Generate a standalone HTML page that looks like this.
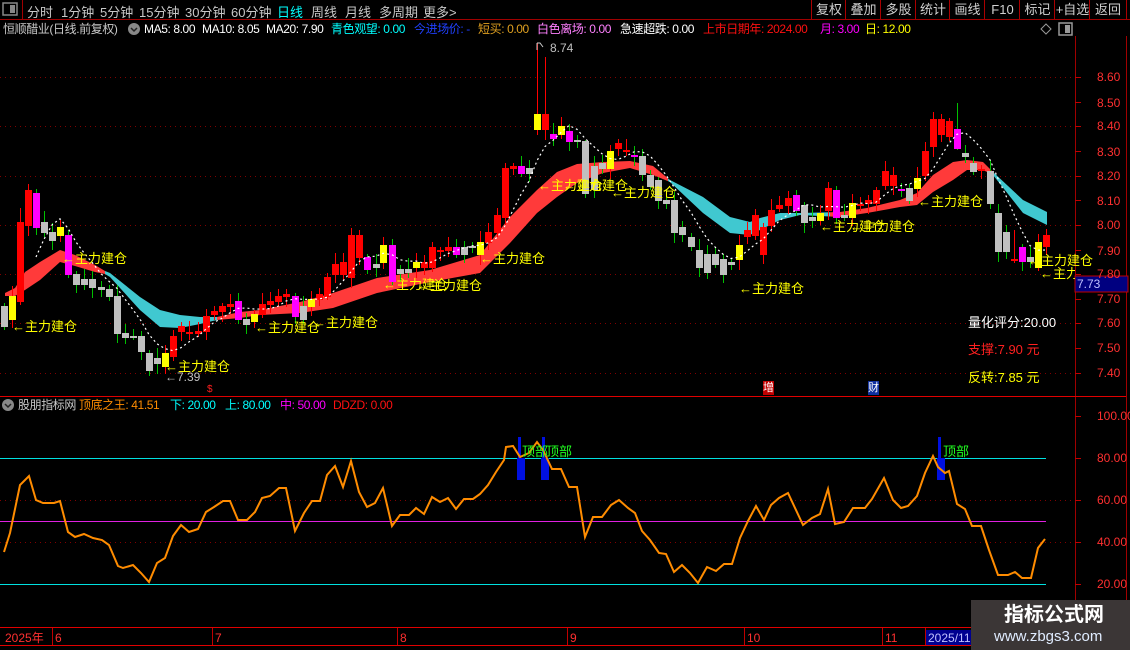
<!DOCTYPE html>
<html><head><meta charset="utf-8">
<style>
body{margin:0;background:#000;width:1130px;height:650px;overflow:hidden;position:relative;font-family:"Liberation Sans","Noto Sans CJK SC",sans-serif;}
.t{position:absolute;white-space:nowrap;font-size:12px;line-height:14px;}
.tb{position:absolute;top:2px;font-size:13px;color:#c8c8c8;white-space:nowrap;}
.btn{position:absolute;top:0;height:19px;border-left:1px solid #a00;color:#d0d0d0;font-size:13px;line-height:19px;text-align:center;}
.lab{position:absolute;color:#ffff00;font-size:13px;white-space:nowrap;line-height:14px;}
.ax{position:absolute;left:1097px;color:#ff3030;font-size:12px;line-height:12px;}
.n{letter-spacing:-0.4px;}
</style></head><body>
<svg id="s" width="1130" height="650" style="position:absolute;left:0;top:0">
<g stroke="#a00000" stroke-width="1">
<line x1="0" y1="19.5" x2="1130" y2="19.5"/>
<line x1="22.5" y1="0" x2="22.5" y2="19"/>
<line x1="1075.5" y1="36" x2="1075.5" y2="630"/>
<line x1="1126.5" y1="36" x2="1126.5" y2="630"/>
<line x1="0" y1="396.5" x2="1126" y2="396.5" stroke="#e00000"/>
<line x1="0" y1="627.5" x2="1126" y2="627.5" stroke="#e00000"/>
<line x1="0" y1="645.5" x2="971" y2="645.5" stroke="#e00000"/>
</g>
<rect x="3" y="3" width="14" height="12" fill="none" stroke="#888" stroke-width="1.5"/><rect x="10" y="5" width="5" height="8" fill="#888"/>
<g stroke="#800000" stroke-dasharray="1,4">
<line x1="0" y1="77.5" x2="1075" y2="77.5"/><line x1="0" y1="126.5" x2="1075" y2="126.5"/><line x1="0" y1="176.5" x2="1075" y2="176.5"/><line x1="0" y1="225.5" x2="1075" y2="225.5"/><line x1="0" y1="274.5" x2="1075" y2="274.5"/><line x1="0" y1="323.5" x2="1075" y2="323.5"/><line x1="0" y1="373.5" x2="1075" y2="373.5"/>
<line x1="0" y1="500.5" x2="1075" y2="500.5"/><line x1="0" y1="542.5" x2="1075" y2="542.5"/>
</g>
<g stroke="#c00000">
<line x1="1075" y1="77.5" x2="1081" y2="77.5"/><line x1="1075" y1="102.5" x2="1081" y2="102.5"/><line x1="1075" y1="126.5" x2="1081" y2="126.5"/><line x1="1075" y1="151.5" x2="1081" y2="151.5"/><line x1="1075" y1="176.5" x2="1081" y2="176.5"/><line x1="1075" y1="200.5" x2="1081" y2="200.5"/><line x1="1075" y1="225.5" x2="1081" y2="225.5"/><line x1="1075" y1="250.5" x2="1081" y2="250.5"/><line x1="1075" y1="274.5" x2="1081" y2="274.5"/><line x1="1075" y1="299.5" x2="1081" y2="299.5"/><line x1="1075" y1="323.5" x2="1081" y2="323.5"/><line x1="1075" y1="348.5" x2="1081" y2="348.5"/><line x1="1075" y1="373.5" x2="1081" y2="373.5"/>
<line x1="1075" y1="416.5" x2="1081" y2="416.5"/><line x1="1075" y1="458.5" x2="1081" y2="458.5"/><line x1="1075" y1="500.5" x2="1081" y2="500.5"/><line x1="1075" y1="542.5" x2="1081" y2="542.5"/><line x1="1075" y1="584.5" x2="1081" y2="584.5"/>
<line x1="52.5" y1="628" x2="52.5" y2="645"/><line x1="212.5" y1="628" x2="212.5" y2="645"/><line x1="397.5" y1="628" x2="397.5" y2="645"/><line x1="567.5" y1="628" x2="567.5" y2="645"/><line x1="744.5" y1="628" x2="744.5" y2="645"/><line x1="882.5" y1="628" x2="882.5" y2="645"/><line x1="925.5" y1="628" x2="925.5" y2="645"/>
</g>
<g id="rib"></g>
<g id="cdl"></g>
<polyline id="ma" fill="none" stroke="#fff" stroke-width="1.2" stroke-dasharray="2,3"/>
<line x1="0" y1="458.5" x2="1046" y2="458.5" stroke="#00e0e0"/>
<line x1="0" y1="521.5" x2="1046" y2="521.5" stroke="#e020e0"/>
<line x1="0" y1="584.5" x2="1046" y2="584.5" stroke="#00e0e0"/>
<g fill="#0010e0"><rect x="518" y="437" width="3" height="43"/><rect x="517" y="458" width="8" height="22"/><rect x="542" y="437" width="3" height="43"/><rect x="541" y="458" width="8" height="22"/><rect x="938" y="437" width="3" height="43"/><rect x="937" y="458" width="8" height="22"/></g>
<polyline fill="none" stroke="#ff8c00" stroke-width="2" points="4,552 10,533 20,485 29,476 36,500 43,503 54,503 60,501 68,532 75,537 84,534 93,538 102,540 109,545 118,566 123,568 133,565 141,573 149,582 157,563 165,558 173,536 181,525 189,532 198,529 206,512 214,507 223,501 230,501 238,520 247,520 255,512 262,498 270,496 279,488 286,488 295,531 304,513 312,501 320,501 327,475 335,466 343,487 351,461 359,492 367,507 375,503 383,488 392,526 400,515 409,515 416,508 424,514 432,497 440,502 448,498 456,509 464,499 473,499 480,494 488,485 496,472 504,460 506,447 513,446 520,457 529,453 537,442 543,450 552,469 561,469 569,487 577,487 585,537 593,517 602,517 611,505 619,500 628,508 635,513 642,531 650,540 659,553 666,554 674,572 682,565 690,573 698,583 707,567 716,571 724,564 732,564 740,538 748,521 756,506 764,520 771,505 779,498 788,493 803,525 812,518 820,514 828,489 835,524 844,522 853,508 865,508 872,499 884,478 893,500 901,508 908,506 917,496 925,473 933,456 938,467 945,473 949,471 957,504 965,509 972,526 981,526 989,550 998,575 1008,575 1015,572 1022,578 1031,578 1038,548 1045,539"/>
<circle cx="8" cy="405" r="6" fill="#888"/><path d="M5 404 L8 407 L11 404" stroke="#222" stroke-width="1.5" fill="none"/>
<circle cx="134" cy="29" r="6" fill="#888"/><path d="M131 28 L134 31 L137 28" stroke="#222" stroke-width="1.5" fill="none"/>
<path d="M1046 24 L1051 29 L1046 34 L1041 29Z" fill="none" stroke="#999"/>
<rect x="1059" y="23" width="13" height="12" fill="none" stroke="#999" stroke-width="1.5"/><rect x="1065" y="25" width="5" height="8" fill="#999"/>
<rect x="1075" y="276" width="53" height="16" fill="#000080" stroke="#c00000"/>
<rect x="926" y="630" width="45" height="15" fill="#000090"/>
<rect x="971" y="600" width="159" height="50" fill="#3b3636"/>
<path d="M537 43 L540 43 L543 47 M537 43 L537 50" stroke="#ccc" fill="none"/>
</svg>

<div class="tb" style="left:27px">分时</div><div class="tb" style="left:61px">1分钟</div><div class="tb" style="left:100px">5分钟</div><div class="tb" style="left:139px">15分钟</div><div class="tb" style="left:185px">30分钟</div><div class="tb" style="left:231px">60分钟</div><div class="tb" style="left:277px;color:#00ffff">日线</div><div class="tb" style="left:311px">周线</div><div class="tb" style="left:345px">月线</div><div class="tb" style="left:379px">多周期</div><div class="tb" style="left:423px">更多&gt;</div>
<div class="btn" style="left:811px;width:34px">复权</div><div class="btn" style="left:845px;width:35px">叠加</div><div class="btn" style="left:880px;width:35px">多股</div><div class="btn" style="left:915px;width:34px">统计</div><div class="btn" style="left:949px;width:35px">画线</div><div class="btn" style="left:984px;width:35px">F10</div><div class="btn" style="left:1019px;width:35px">标记</div><div class="btn" style="left:1054px;width:35px">+自选</div><div class="btn" style="left:1089px;width:36px;border-right:1px solid #a00">返回</div>

<div class="t n" style="left:3px;top:22px;color:#c8c8c8">恒顺醋业(日线.前复权)</div>
<div class="t n" style="left:144px;top:22px;color:#fff">MA5: 8.00</div>
<div class="t n" style="left:202px;top:22px;color:#fff">MA10: 8.05</div>
<div class="t n" style="left:266px;top:22px;color:#fff">MA20: 7.90</div>
<div class="t n" style="left:331px;top:22px;color:#00ffff">青色观望: 0.00</div>
<div class="t n" style="left:414px;top:22px;color:#2040ff">今进场价: -</div>
<div class="t n" style="left:478px;top:22px;color:#e0a020">短买: 0.00</div>
<div class="t n" style="left:537px;top:22px;color:#ff80ff">白色离场: 0.00</div>
<div class="t n" style="left:620px;top:22px;color:#fff">急速超跌: 0.00</div>
<div class="t n" style="left:703px;top:22px;color:#ff1010">上市日期年: 2024.00</div>
<div class="t n" style="left:820px;top:22px;color:#ff00ff">月: 3.00</div>
<div class="t n" style="left:865px;top:22px;color:#ffff00">日: 12.00</div>

<div class="ax" style="top:71px">8.60</div><div class="ax" style="top:97px">8.50</div><div class="ax" style="top:120px">8.40</div><div class="ax" style="top:146px">8.30</div><div class="ax" style="top:170px">8.20</div><div class="ax" style="top:195px">8.10</div><div class="ax" style="top:219px">8.00</div><div class="ax" style="top:245px">7.90</div><div class="ax" style="top:268px">7.80</div><div class="ax" style="top:293px">7.70</div><div class="ax" style="top:317px">7.60</div><div class="ax" style="top:342px">7.50</div><div class="ax" style="top:367px">7.40</div>
<div class="t" style="left:1077px;top:277px;color:#c0c0ff">7.73</div>
<div class="ax" style="top:410px">100.00</div><div class="ax" style="top:452px">80.00</div><div class="ax" style="top:494px">60.00</div><div class="ax" style="top:536px">40.00</div><div class="ax" style="top:578px">20.00</div>

<div class="lab" style="left:12px;top:320px">←主力建仓</div>
<div class="lab" style="left:62px;top:252px">←主力建仓</div>
<div class="lab" style="left:165px;top:360px">←主力建仓</div>
<div class="lab" style="left:255px;top:321px">←主力建仓</div>
<div class="lab" style="left:313px;top:316px">←主力建仓</div>
<div class="lab" style="left:383px;top:278px">←主力建仓</div>
<div class="lab" style="left:417px;top:279px">←主力建仓</div>
<div class="lab" style="left:480px;top:252px">←主力建仓</div>
<div class="lab" style="left:538px;top:179px">←主力建仓</div>
<div class="lab" style="left:563px;top:179px">←主力建仓</div>
<div class="lab" style="left:611px;top:186px">←主力建仓</div>
<div class="lab" style="left:739px;top:282px">←主力建仓</div>
<div class="lab" style="left:820px;top:220px">←主力建仓</div>
<div class="lab" style="left:850px;top:220px">←主力建仓</div>
<div class="lab" style="left:918px;top:195px">←主力建仓</div>
<div class="lab" style="left:1028px;top:254px">←主力建仓</div>
<div class="lab" style="left:1040px;top:267px;width:35px;overflow:hidden">←主力建仓</div>
<div class="t" style="left:165px;top:370px;color:#c0c0c0">←7.39</div>
<div class="t" style="left:550px;top:41px;color:#c0c0c0">8.74</div>
<div class="t" style="left:207px;top:383px;color:#ff2020;font-size:10px">$</div>
<div class="t" style="left:763px;top:381px;color:#fff;background:#c00000;font-size:11px">增</div>
<div class="t" style="left:868px;top:381px;color:#fff;background:#1030a0;font-size:11px">财</div>

<div class="t" style="left:968px;top:316px;color:#fff;font-size:13px">量化评分:20.00</div>
<div class="t" style="left:968px;top:343px;color:#ff2020;font-size:13px">支撑:7.90 元</div>
<div class="t" style="left:968px;top:371px;color:#ffff00;font-size:13px">反转:7.85 元</div>

<div class="t n" style="left:18px;top:398px;color:#c8c8c8">股朋指标网</div>
<div class="t n" style="left:79px;top:398px;color:#ff8c00">顶底之王: 41.51</div>
<div class="t n" style="left:170px;top:398px;color:#00ffff">下: 20.00</div>
<div class="t n" style="left:225px;top:398px;color:#00ffff">上: 80.00</div>
<div class="t n" style="left:280px;top:398px;color:#ff00ff">中: 50.00</div>
<div class="t n" style="left:333px;top:398px;color:#ff1010">DDZD: 0.00</div>
<div class="t" style="left:522px;top:445px;color:#20ff20;font-size:13px">顶部</div>
<div class="t" style="left:546px;top:445px;color:#20ff20;font-size:13px">顶部</div>
<div class="t" style="left:943px;top:445px;color:#20ff20;font-size:13px">顶部</div>

<div class="t" style="left:5px;top:631px;color:#ff3030">2025年</div>
<div class="t" style="left:55px;top:631px;color:#ff3030">6</div>
<div class="t" style="left:215px;top:631px;color:#ff3030">7</div>
<div class="t" style="left:400px;top:631px;color:#ff3030">8</div>
<div class="t" style="left:570px;top:631px;color:#ff3030">9</div>
<div class="t" style="left:747px;top:631px;color:#ff3030">10</div>
<div class="t" style="left:885px;top:631px;color:#ff3030">11</div>
<div class="t" style="left:928px;top:631px;color:#c0c0ff">2025/11</div>
<div class="t" style="left:1004px;top:604px;color:#fff;font-size:20px;line-height:22px;font-weight:bold">指标公式网</div>
<div class="t" style="left:994px;top:628px;color:#e0ecff;font-size:15px;line-height:17px">www.zbgs3.com</div>

<script>
var NS="http://www.w3.org/2000/svg";
function el(t,a,p){var e=document.createElementNS(NS,t);for(var k in a)e.setAttribute(k,a[k]);p.appendChild(e);return e;}
var C=[[4,306,327,'g'],[12,296,320,'y'],[20,222,302,'r'],[28,190,226,'r'],[36,193,228,'m'],[44,222,233,'g'],[52,232,241,'g'],[60,227,236,'y'],[68,235,275,'m'],[76,274,285,'g'],[84,279,285,'g'],[92,279,288,'g'],[101,287,290,'g'],[109,289,297,'g'],[117,296,334,'g'],[125,333,338,'g'],[133,336,337,'g'],[141,336,352,'g'],[149,353,371,'g'],[157,358,364,'g'],[165,353,367,'y'],[173,336,357,'r'],[181,326,332,'r'],[189,332,334,'r'],[198,331,334,'r'],[206,316,332,'r'],[214,311,315,'r'],[222,306,312,'r'],[230,304,307,'r'],[238,301,320,'m'],[246,319,325,'g'],[254,314,322,'y'],[262,304,315,'r'],[270,301,305,'r'],[278,296,302,'r'],[286,294,297,'r'],[295,296,317,'m'],[303,306,320,'g'],[311,299,307,'y'],[319,294,300,'r'],[327,277,297,'r'],[335,264,275,'r'],[343,262,275,'r'],[351,235,278,'r'],[359,235,258,'r'],[367,257,270,'m'],[376,264,268,'g'],[383,245,263,'y'],[392,245,282,'m'],[400,269,274,'g'],[408,269,273,'g'],[416,262,268,'y'],[424,262,268,'r'],[432,247,268,'r'],[440,250,252,'r'],[448,247,251,'r'],[456,247,255,'m'],[464,247,255,'g'],[472,246,248,'g'],[480,242,255,'y'],[488,232,243,'r'],[497,215,233,'r'],[505,168,218,'r'],[513,166,169,'r'],[521,166,174,'m'],[529,168,174,'g'],[537,114,130,'y'],[545,114,130,'r'],[553,134,139,'m'],[561,126,135,'y'],[569,131,142,'m'],[577,140,142,'g'],[585,141,194,'g'],[594,166,190,'g'],[602,163,169,'g'],[610,151,169,'y'],[618,143,149,'r'],[626,150,152,'r'],[634,155,157,'m'],[642,156,175,'g'],[650,175,187,'g'],[658,180,201,'g'],[666,200,204,'g'],[674,200,233,'g'],[682,227,235,'g'],[691,237,247,'g'],[699,250,268,'g'],[707,254,273,'g'],[715,254,265,'g'],[723,259,275,'g'],[731,262,265,'g'],[739,245,260,'y'],[747,230,237,'r'],[755,215,236,'r'],[763,227,255,'r'],[771,210,226,'r'],[779,205,209,'r'],[788,198,206,'r'],[796,195,211,'m'],[804,205,223,'g'],[812,217,221,'g'],[820,213,221,'y'],[828,188,211,'r'],[836,190,218,'m'],[844,215,218,'g'],[852,203,218,'y'],[860,204,206,'r'],[868,200,204,'r'],[876,190,204,'r'],[885,171,186,'r'],[893,175,186,'r'],[901,189,191,'m'],[909,188,201,'g'],[917,178,189,'y'],[925,151,176,'r'],[933,119,147,'r'],[941,119,135,'r'],[949,121,137,'r'],[957,129,149,'m'],[965,153,157,'g'],[973,163,172,'g'],[981,169,171,'r'],[990,171,204,'g'],[998,213,252,'g'],[1006,232,252,'g'],[1014,259,261,'r'],[1022,247,262,'m'],[1030,257,262,'g'],[1038,242,268,'y'],[1046,235,247,'r']];
var col={r:'#ff0000',g:'#c0c0c0',y:'#ffff00',m:'#ff00ff'};
var W={537:[43,135],545:[57,140],957:[103,150],1014:[230,263],585:[140,198],20:[208,305]};
var U=[[5,293],[15,288],[25,272],[40,262],[60,250],[75,255],[95,265],[105,271],[110,273],[140,297],[160,310],[180,315],[200,317],[217,317],[240,312],[260,310],[300,302],[333,293],[377,278],[430,270],[480,255],[510,217],[537,190],[557,172],[577,164],[603,162],[630,161],[653,166],[670,180],[703,197],[730,217],[750,222],[760,218],[780,213],[800,213],[840,212],[867,208],[900,200],[917,193],[933,175],[953,162],[967,160],[983,162],[993,172],[1023,200],[1047,212]];
var L=[[5,296],[15,296],[25,290],[40,280],[60,262],[75,266],[95,272],[105,274],[110,277],[140,310],[160,327],[180,328],[200,324],[217,320],[240,318],[260,315],[300,313],[333,308],[377,293],[430,282],[480,273],[510,243],[537,213],[557,197],[577,183],[603,173],[630,168],[653,175],[670,182],[703,213],[730,233],[750,235],[760,230],[780,220],[800,215],[840,217],[867,213],[900,207],[917,205],[933,192],[953,180],[967,170],[983,170],[993,175],[1023,213],[1047,225]];
var pts=U.map(function(p){return p.join(',')}).concat(L.slice().reverse().map(function(p){return p.join(',')})).join(' ');
var rib=document.getElementById('rib');
var defs=el('defs',{},rib);
var segs=[[0,105,'#ff3a3a'],[105,217,'#40c8d0'],[217,668,'#ff3a3a'],[668,830,'#40c8d0'],[830,993,'#ff3a3a'],[993,1060,'#40c8d0']];
segs.forEach(function(s,i){var cp=el('clipPath',{id:'c'+i},defs);el('rect',{x:s[0],y:0,width:s[1]-s[0],height:400},cp);el('polygon',{points:pts,fill:s[2],'clip-path':'url(#c'+i+')'},rib);});
var g=document.getElementById('cdl');
C.forEach(function(c,i){
 var x=c[0],t=c[1],b=c[2],k=c[3];
 var hi=t-3-(i*7%9),lo=b+3+(i*5%8);
 if(W[x]){hi=W[x][0];lo=W[x][1];}
 var wc=(k=='r'||k=='y')?'#ff0000':'#00c000';
 el('line',{x1:x+0.5,x2:x+0.5,y1:hi,y2:lo,stroke:wc,'stroke-width':1},g);
 var h=Math.max(b-t,2);
 el('rect',{x:x-3,y:t,width:7,height:h,fill:col[k]},g);
});
var m=[];
for(var i=4;i<C.length;i++){var s=0;for(var j=i-4;j<=i;j++)s+=(C[j][1]+C[j][2])/2;m.push(C[i][0]+','+(s/5-4).toFixed(1));}
document.getElementById('ma').setAttribute('points',m.join(' '));
</script>
</body></html>
